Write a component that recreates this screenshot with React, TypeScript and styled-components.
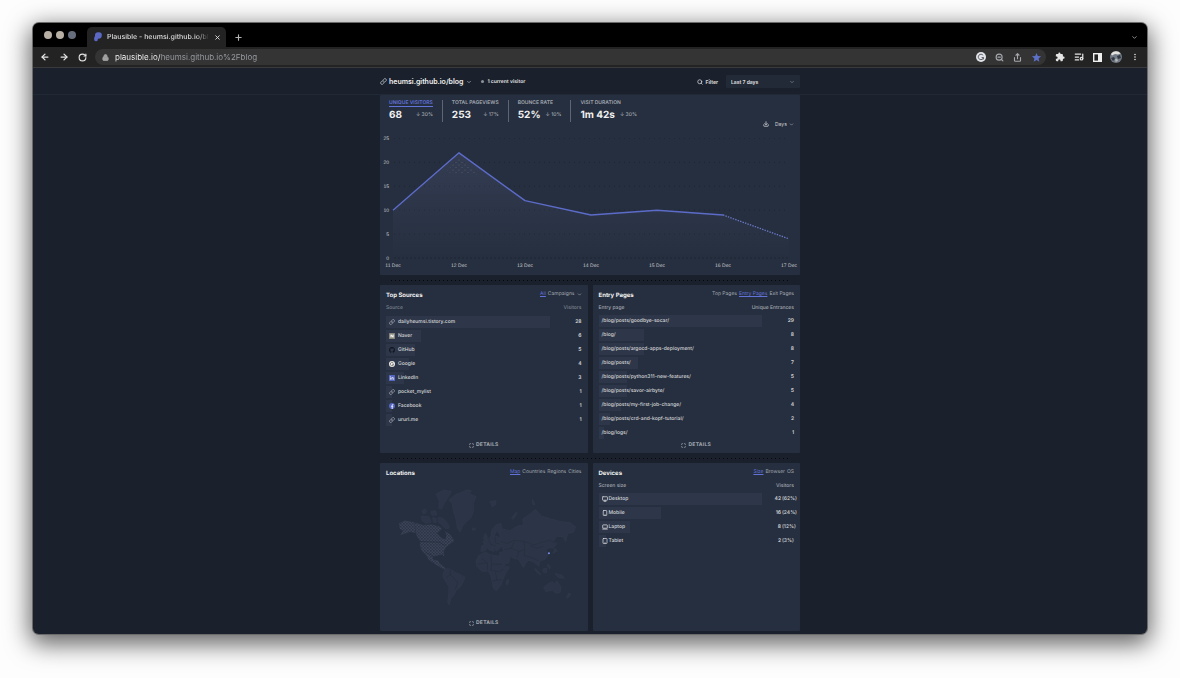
import React from "react";
import styled, { createGlobalStyle, css } from "styled-components";
import {
  ArrowLeft,
  ArrowRight,
  ChevronDown,
  Download,
  Link as LinkIcon,
  ListMusic,
  Lock,
  Maximize,
  Monitor,
  Plus,
  RotateCw,
  Search,
  Share,
  Smartphone,
  Tablet,
  X,
  ZoomOut,
} from "lucide-react";
import { MdExtension, MdStar, MdMoreVert } from "react-icons/md";
import { FaGithub } from "react-icons/fa";

const color = {
  page: "#1b212c",
  card: "#262f3f",
  bar: "#2e3749",
  text: "#d6d7d9",
  strong: "#f1f1f0",
  muted: "#a3a8b0",
  faint: "#7b828e",
  accent: "#6172d8",
};

const Global = createGlobalStyle`
  * { box-sizing: border-box; }
  body {
    margin: 0;
    background: #fdfdfd;
    color: ${color.text};
    font-family: Inter, "Liberation Sans", sans-serif;
    font-size: 5px;
    line-height: 8px;
    text-rendering: geometricPrecision;
  }
  button, select, input { font: inherit; color: inherit; }
  h1, h2, p, dl, dd, dt, ul { margin: 0; padding: 0; }
  svg { display: block; flex: none; }
`;

/* ---------- browser frame ---------- */

const Window = styled.div`
  margin: 23px 33px 44px;
  border-radius: 6px;
  overflow: hidden;
  background: ${color.page};
  box-shadow: 0 0 0 1px #6b6b6b, 0 7px 24px 3px rgba(0, 0, 0, 0.62);
`;

const TabStrip = styled.div`
  display: flex;
  align-items: flex-end;
  height: 24px;
  padding: 0 9px 0 11px;
  background: #000;
`;

const Lights = styled.div`
  display: flex;
  gap: 4px;
  align-self: center;
  margin-right: 11px;
`;

const Light = styled.span<{ $tone: string }>`
  width: 8px;
  height: 8px;
  border-radius: 50%;
  background: ${(p) => p.$tone};
`;

const Tab = styled.div`
  display: flex;
  align-items: center;
  width: 139px;
  height: 20px;
  padding: 0 6px 0 7px;
  gap: 5px;
  border-radius: 5px 5px 0 0;
  background: #232323;
`;

const TabTitle = styled.span`
  flex: 1;
  white-space: nowrap;
  font-size: 7px;
  line-height: 10px;
  font-weight: 500;
  color: #dcdcdc;
  mask-image: linear-gradient(90deg, #000 88%, transparent);
`;

const IconButton = styled.button<{ $tone?: string }>`
  display: flex;
  align-items: center;
  justify-content: center;
  padding: 0;
  border: 0;
  background: none;
  color: ${(p) => p.$tone || "#e4e4e4"};
`;

const NewTab = styled(IconButton)`
  height: 20px;
  margin-left: 8px;
`;

const TabMenu = styled(IconButton)`
  height: 20px;
  margin-left: auto;
`;

const Toolbar = styled.div`
  display: flex;
  align-items: center;
  height: 21px;
  gap: 9px;
  padding: 0 7px;
  background: #232323;
  border-bottom: 1px solid #3a3a3c;
`;

const Address = styled.form`
  display: flex;
  flex: 1;
  align-items: center;
  gap: 6px;
  height: 16px;
  margin-left: -1px;
  padding: 0 4px 0 7px;
  border-radius: 8px;
  background: #343434;
`;

const AddressInput = styled.input`
  flex: 1;
  min-width: 0;
  padding: 0;
  border: 0;
  outline: 0;
  font-size: 8px;
  line-height: 12px;
  color: transparent;
  background: linear-gradient(90deg, #fff 45px, #9c9fa6 45px);
  background-clip: text;
  -webkit-background-clip: text;
`;

const AddressActions = styled.div`
  display: flex;
  align-items: center;
  gap: 9px;
`;

const Avatar = styled(IconButton)`
  width: 12px;
  height: 12px;
  margin: 0 -1px;
`;

/* ---------- site header ---------- */

const SiteHeader = styled.header`
  border-bottom: 1px solid #222936;
`;

const Container = styled.div`
  width: 420px;
  max-width: 100%;
  margin: 0 auto;
`;

const HeaderRow = styled(Container)`
  display: flex;
  align-items: center;
  height: 26px;
  padding-top: 1px;
`;

const SiteButton = styled.button`
  display: flex;
  align-items: center;
  gap: 2px;
  padding: 0;
  border: 0;
  background: none;
  color: ${color.muted};
`;

const SiteName = styled.h1`
  font-size: 7px;
  line-height: 10px;
  font-weight: 600;
  color: ${color.strong};
  margin-right: 1px;
`;

const Current = styled.p`
  display: flex;
  align-items: center;
  gap: 3px;
  margin-left: 9px;
  font-weight: 700;
`;

const Pulse = styled.span`
  width: 3px;
  height: 3px;
  border-radius: 50%;
  background: #8d939c;
`;

const FilterButton = styled.button`
  display: flex;
  align-items: center;
  gap: 2px;
  margin: 0 8px 0 auto;
  padding: 0;
  border: 0;
  background: none;
  font-weight: 700;
`;

const SelectBox = styled.label<{ $filled?: boolean }>`
  display: flex;
  align-items: center;
  gap: 2px;
  color: ${color.muted};
  ${(p) =>
    p.$filled &&
    css`
      width: 74px;
      height: 13px;
      padding: 0 5px;
      border-radius: 1px;
      background: #222937;
      font-weight: 700;
    `}
`;

const Select = styled.select`
  flex: 1;
  appearance: none;
  padding: 0;
  border: 0;
  outline: 0;
  background: none;
  color: ${color.text};
`;

/* ---------- main graph ---------- */

const Main = styled(Container).attrs({ as: "main" })`
  padding-bottom: 3px;
`;

const Panel = styled.section`
  border-radius: 1px;
  background: ${color.card};
`;

const GraphHead = styled.div`
  display: flex;
  align-items: flex-end;
  justify-content: space-between;
  height: 34px;
  padding: 5px 6px 0 0;
`;

const Metrics = styled.dl`
  display: flex;
  align-self: flex-start;
`;

const Metric = styled.div`
  height: 22px;
  padding: 0 9px;
  border-right: 1px solid #5d6572;
  &:last-child { border-right: 0; }
`;

const MetricLabel = styled.dt<{ $active?: boolean }>`
  width: max-content;
  font-size: 5px;
  line-height: 6px;
  font-weight: 600;
  text-transform: uppercase;
  color: ${(p) => (p.$active ? color.accent : color.muted)};
  border-bottom: 1px solid ${(p) => (p.$active ? color.accent : "transparent")};
`;

const MetricValue = styled.dd`
  display: flex;
  align-items: center;
  justify-content: space-between;
  gap: 5px;
  height: 16px;
  font-size: 10px;
  line-height: 16px;
  font-weight: 700;
  color: ${color.strong};
  white-space: nowrap;
`;

const Change = styled.span`
  font-size: 5px;
  font-weight: 500;
  color: ${color.muted};
`;

const GraphTools = styled.div`
  display: flex;
  align-items: center;
  height: 10px;
  gap: 6px;
`;

const ChartSvg = styled.svg`
  width: 100%;
  height: auto;
  text {
    font-family: "Liberation Sans", sans-serif;
    font-size: 5px;
    fill: #c9cbcf;
  }
`;

/* ---------- report cards ---------- */

const Cards = styled.div`
  display: grid;
  grid-template-columns: 1fr 1fr;
  gap: 0 5px;
`;

const DotRule = styled.div`
  grid-column: 1 / -1;
  height: 10px;
  margin: 0 11px;
  background: repeating-linear-gradient(90deg, #05070a 0 1px, transparent 1px 4px) center / 100% 1px no-repeat;
`;

const Card = styled(Panel)`
  display: flex;
  flex-direction: column;
  min-height: 168px;
  padding: 5px 6px 4px;
`;

const CardHead = styled.div`
  display: flex;
  justify-content: space-between;
  height: 12px;
`;

const CardTitle = styled.h2`
  font-size: 6px;
  line-height: 12px;
  font-weight: 700;
  color: ${color.strong};
`;

const Tabs = styled.nav`
  display: flex;
  align-items: center;
  gap: 2px;
  height: 8px;
`;

const TabLink = styled.a<{ $active?: boolean }>`
  font-size: 5px;
  line-height: 8px;
  color: ${(p) => (p.$active ? color.accent : color.muted)};
  text-decoration: ${(p) => (p.$active ? "underline" : "none")};
`;

const Report = styled.table<{ $spaced?: boolean }>`
  width: 100%;
  table-layout: fixed;
  border-collapse: collapse;
  margin-top: 1px;
  th {
    height: ${(p) => (p.$spaced ? 13 : 12)}px;
    padding: 1px 0 0;
    vertical-align: top;
    text-align: left;
    font-weight: 500;
    color: ${(p) => (p.$spaced ? color.faint : color.muted)};
  }
  th:last-child { width: 32px; text-align: right; white-space: nowrap; direction: rtl; }
  td { padding: 0 0 2px; }
  td:last-child { text-align: right; font-weight: 600; white-space: nowrap; }
`;

const Bar = styled.div<{ $tight?: boolean }>`
  display: flex;
  align-items: center;
  gap: ${(p) => (p.$tight ? 1 : 3)}px;
  height: 12px;
  padding-left: 3px;
  background: ${color.bar};
  font-weight: 500;
  white-space: nowrap;
`;

const Percent = styled.span`
  display: inline-block;
  width: 12px;
  margin-left: 1px;
  text-align: left;
  font-weight: 500;
`;

const Details = styled.a`
  display: flex;
  align-items: center;
  gap: 2px;
  margin: auto auto 0;
  font-size: 5px;
  line-height: 8px;
  font-weight: 700;
  letter-spacing: 0.05em;
  color: ${color.muted};
  text-decoration: none;
`;

const WorldMap = styled.svg`
  width: 187px;
  height: 123px;
  margin: 6px auto 0;
`;

/* ---------- drawings ---------- */

const PlausibleLogo = () => (
  <svg width="8" height="10" viewBox="0 0 8 10">
    <path d="M1 3.2A3 3 0 0 1 4 0.2h1a3 3 0 0 1 2.8 3.4A3.4 3.4 0 0 1 4.4 6.8H3.8V8A1.9 1.9 0 0 1 .2 8V5.4A1.8 1.8 0 0 0 1 4Z" fill="#5b69c4" />
  </svg>
);

const Grammarly = () => (
  <svg width="10" height="10" viewBox="0 0 10 10">
    <circle cx="5" cy="5" r="5" fill="#e2e3e6" />
    <path d="M7.2 3.4A2.7 2.7 0 1 0 7.6 5.6H5.6M7.4 5.6V7.4" fill="none" stroke="#565a66" strokeWidth="1" />
  </svg>
);

const SidePanel = () => (
  <svg width="9" height="9" viewBox="0 0 9 9">
    <rect x="0.7" y="0.7" width="7.6" height="7.6" fill="none" stroke="#efefef" strokeWidth="1.4" />
    <rect x="5" y="1" width="3.3" height="7" fill="#efefef" />
  </svg>
);

const AvatarPicture = () => (
  <svg width="12" height="12" viewBox="0 0 12 12">
    <circle cx="6" cy="6" r="6" fill="#717986" />
    <path d="M1 3A6 6 0 0 1 10.6 2.4L8 3.6 5 3 2 4.6Z" fill="#e3e1dc" />
    <path d="M1 7 4 6l1 2-2 2ZM7 5l3-1 1 3-3 1Z" fill="#323842" />
    <path d="M5 8 7 7.4 8 10 5.6 11Z" fill="#b6b6b4" />
  </svg>
);

const NaverMark = () => (
  <svg width="6" height="6" viewBox="0 0 6 6">
    <rect width="6" height="6" rx="0.6" fill="#85857c" />
    <path d="M1.4 4.6V1.4h1.2l1 1.5V1.4h1.1v3.2H3.5l-1-1.5v1.5Z" fill="#f2f2ee" />
  </svg>
);

const GoogleMark = () => (
  <svg width="6" height="6" viewBox="0 0 6 6">
    <circle cx="3" cy="3" r="3" fill="#eeeeec" />
    <path d="M4.3 1.9A1.7 1.7 0 1 0 4.7 3.2H3.1" fill="none" stroke="#6f6c68" strokeWidth="0.8" />
  </svg>
);

const LinkedInMark = () => (
  <svg width="6" height="6" viewBox="0 0 6 6">
    <rect width="6" height="6" rx="0.6" fill="#5466c4" />
    <path d="M1.4 2.4v2.3M1.4 1.1v.7M2.9 4.7V2.4M2.9 3.4c0-1.2 1.7-1.2 1.7 0v1.3" fill="none" stroke="#f4f4f8" strokeWidth="0.8" />
  </svg>
);

const FacebookMark = () => (
  <svg width="6" height="6" viewBox="0 0 6 6">
    <circle cx="3" cy="3" r="3" fill="#5466c4" />
    <path d="M4.3 1.5H3.9c-.6 0-.7.3-.7.8V6M2.2 3.3h2" fill="none" stroke="#f4f4f8" strokeWidth="0.9" />
  </svg>
);

const LaptopMark = () => (
  <svg width="6" height="6" viewBox="0 0 6 6" fill="none" stroke="currentColor" strokeWidth="0.8">
    <rect x="0.7" y="0.9" width="4.6" height="3.3" rx="0.4" />
    <path d="M0.3 5.1H5.7" />
  </svg>
);

const ChainMark = () => <LinkIcon size={6} strokeWidth={3} color="#a5aab2" />;

const source = {
  link: <ChainMark />,
  naver: <NaverMark />,
  github: <FaGithub size={6} color="#0f141c" />,
  google: <GoogleMark />,
  linkedin: <LinkedInMark />,
  facebook: <FacebookMark />,
};

const xAt = (i: number) => 13 + i * 66;
const yAt = (v: number) => 129 - v * 4.78;
const visits = [10, 22, 12, 9, 10, 9, 4];
const points = visits.map((v, i) => `${xAt(i)},${yAt(v)}`);

const Chart = () => (
  <ChartSvg viewBox="0 0 420 146" role="img" aria-label="Unique visitors per day">
    <defs>
      <linearGradient id="area" x1="0" y1="0" x2="0" y2="1">
        <stop offset="0" stopColor="#7a84b8" stopOpacity="0.16" />
        <stop offset="1" stopColor="#7a84b8" stopOpacity="0" />
      </linearGradient>
      <pattern id="speck" width="6" height="5" patternUnits="userSpaceOnUse">
        <circle cx="1" cy="1" r="0.5" fill="#596172" />
        <circle cx="4" cy="3.5" r="0.5" fill="#596172" />
      </pattern>
    </defs>
    {[0, 5, 10, 15, 20, 25].map((v) => (
      <g key={v}>
        <line x1="14" x2="409" y1={yAt(v)} y2={yAt(v)} stroke="#1b222e" strokeWidth="1" strokeDasharray={v ? "1 4" : "2 2"} strokeOpacity="0.7" />
        <text x="9" y={yAt(v) + 1.5} textAnchor="end">{v}</text>
      </g>
    ))}
    <polygon points={`13,129 ${points.join(" ")} 409,129`} fill="url(#area)" />
    <polygon points="79,28 66,43 98,46" fill="url(#speck)" />
    <polyline points={points.slice(0, 6).join(" ")} fill="none" stroke="#5c6bc8" strokeWidth="1.4" strokeLinejoin="round" />
    <polyline points={points.slice(5).join(" ")} fill="none" stroke="#6b78c8" strokeWidth="1.3" strokeDasharray="1.4 1.2" />
    {visits.map((_, i) => (
      <text key={i} x={xAt(i)} y="138" textAnchor="middle">{`${11 + i} Dec`}</text>
    ))}
  </ChartSvg>
);

const land = [
  "M134 220 160 228 185 226 208 232 215 238 200 252 214 266 226 270 230 258 226 246 240 256 252 274 244 280 228 292 220 306 222 320 216 314 200 318 186 320 190 332 204 334 208 342 226 356 220 358 206 350 190 340 176 330 168 316 156 304 150 288 152 276 140 258Z",
  "M88 222 104 214 132 219 136 250 120 246 104 252 92 256 100 244 90 238Z",
  "M198 134 222 122 244 126 236 140 224 160 214 180 206 176 208 156Z",
  "M204 204 218 206 232 220 238 236 226 238 214 226 204 218Z",
  "M154 200 176 202 184 218 168 222 156 214ZM156 184 166 178 170 188 160 194ZM182 186 196 184 200 196 186 198ZM188 204 198 206 198 220 190 218Z",
  "M236 152 256 136 276 128 290 122 304 124 298 132 318 142 310 160 310 184 302 206 286 220 276 232 270 248 262 236 258 212 250 184 246 162Z",
  "M224 358 240 358 254 368 268 374 284 382 280 396 270 412 258 422 252 436 242 446 238 466 233 460 236 430 236 410 224 392 218 378Z",
  "M326 318 346 308 360 316 388 320 396 336 404 350 418 352 406 372 398 390 392 408 378 424 370 416 366 398 362 378 354 364 336 366 320 350 318 334Z",
  "M332 306 334 290 344 284 338 276 356 268 364 258 384 262 392 276 390 296 378 304 366 292 372 306 356 300 350 294 344 304Z",
  "M362 256 366 240 378 226 392 222 396 240 386 252 378 244 372 262ZM340 266 346 252 352 266 344 272ZM306 236 316 236 314 242 306 241Z",
  "M390 276 388 250 396 238 420 244 440 230 460 226 458 208 476 196 496 180 514 200 540 208 570 216 600 220 616 232 610 248 592 252 586 276 578 262 560 260 548 276 560 282 548 296 540 294 526 300 534 316 524 330 508 334 506 350 498 344 490 338 476 332 466 342 460 354 452 342 446 330 430 326 420 320 416 340 400 346 390 326 388 310 402 306 396 294Z",
  "M360 156 378 154 376 166 366 172ZM424 206 438 188 440 192 428 210ZM486 150 494 166 488 166Z",
  "M520 412 532 404 546 396 552 402 560 394 572 412 570 428 558 432 546 422 526 426Z",
  "M494 356 512 374 508 376 494 362ZM518 358 530 356 528 370 518 368ZM554 372 574 376 582 386 564 384ZM532 344 540 350 538 358 532 352Z",
  "M596 430 602 434 592 446 588 444ZM410 392 416 390 412 406 408 404ZM554 296 560 304 548 312Z",
];

const borders =
  "M150 276 206 278 226 288M166 308 190 320M236 372 250 384 262 398 256 420M240 360 242 376 228 384M334 326 352 340 352 362M362 318 364 344 396 344M364 344 362 362 386 366 400 360M350 340 320 344M376 366 380 392 366 394M380 392 396 390M390 276 412 282 432 272 462 276 492 286 516 278 540 272 556 282M432 276 424 296 402 300M424 296 446 306 464 300 462 276M464 300 462 318 488 326 504 334M480 288 498 296 520 290M446 306 440 326M356 268 362 286 378 288M374 262 376 280 392 284";

const WorldMapDrawing = () => (
  <WorldMap viewBox="60 110 560 368" role="img" aria-label="Visitors by country">
    <defs>
      <pattern id="dots" width="9" height="9" patternUnits="userSpaceOnUse">
        <rect x="1" y="1" width="3" height="3" fill="#5a6376" />
        <rect x="5.5" y="5.5" width="3" height="3" fill="#5a6376" />
      </pattern>
    </defs>
    {land.map((d) => (
      <path key={d} d={d} fill="#2c3547" stroke="#2f394b" strokeWidth="2" />
    ))}
    {land.slice(0, 2).map((d) => (
      <path key={d} d={d} fill="url(#dots)" fillOpacity="0.8" />
    ))}
    <path d={borders} fill="none" stroke={color.card} strokeWidth="2.4" />
    <circle cx="536" cy="311" r="3" fill="#7a8cf0" />
  </WorldMap>
);

/* ---------- data ---------- */

const sources = [
  { icon: source.link, name: "dailyheumsi.tistory.com", count: 28 },
  { icon: source.naver, name: "Naver", count: 6 },
  { icon: source.github, name: "GitHub", count: 5 },
  { icon: source.google, name: "Google", count: 4 },
  { icon: source.linkedin, name: "LinkedIn", count: 3 },
  { icon: source.link, name: "pocket_mylist", count: 1 },
  { icon: source.facebook, name: "Facebook", count: 1 },
  { icon: source.link, name: "ururl.me", count: 1 },
];

const entries = [
  { name: "/blog/posts/goodbye-socar/", count: 29 },
  { name: "/blog/", count: 8 },
  { name: "/blog/posts/argocd-apps-deployment/", count: 8 },
  { name: "/blog/posts/", count: 7 },
  { name: "/blog/posts/python311-new-features/", count: 5 },
  { name: "/blog/posts/savor-airbyte/", count: 5 },
  { name: "/blog/posts/my-first-job-change/", count: 4 },
  { name: "/blog/posts/crd-and-kopf-tutorial/", count: 2 },
  { name: "/blog/logs/", count: 1 },
];

const devices = [
  { icon: <Monitor size={6} strokeWidth={3} />, name: "Desktop", count: 42, percent: "(62%)" },
  { icon: <Smartphone size={6} strokeWidth={3} />, name: "Mobile", count: 16, percent: "(24%)" },
  { icon: <LaptopMark />, name: "Laptop", count: 8, percent: "(12%)" },
  { icon: <Tablet size={6} strokeWidth={3} />, name: "Tablet", count: 2, percent: "(3%)" },
];

const metrics = [
  { label: "Unique visitors", value: "68", change: "30%", active: true },
  { label: "Total pageviews", value: "253", change: "17%" },
  { label: "Bounce rate", value: "52%", change: "10%" },
  { label: "Visit duration", value: "1m 42s", change: "30%" },
];

type Row = { icon?: React.ReactNode; name: string; count: number; percent?: string };

const ReportTable = ({ heads, rows, spaced }: { heads: [string, string]; rows: Row[]; spaced?: boolean }) => (
  <Report $spaced={spaced}>
    <thead>
      <tr>
        <th scope="col">{heads[0]}</th>
        <th scope="col">{heads[1]}</th>
      </tr>
    </thead>
    <tbody>
      {rows.map((row) => (
        <tr key={row.name}>
          <td>
            <Bar $tight={Boolean(row.percent)} style={{ width: `${(row.count / rows[0].count) * 100}%` }}>
              {row.icon}
              {row.name}
            </Bar>
          </td>
          <td>
            {row.count}
            {row.percent && <Percent>{row.percent}</Percent>}
          </td>
        </tr>
      ))}
    </tbody>
  </Report>
);

const CardTop = ({ title, tabs, active, menu }: { title: string; tabs: string[]; active: string; menu?: boolean }) => (
  <CardHead>
    <CardTitle>{title}</CardTitle>
    <Tabs>
      {tabs.map((tab) => (
        <TabLink key={tab} href="#" $active={tab === active}>{tab}</TabLink>
      ))}
      {menu && <ChevronDown size={5} strokeWidth={3} color={color.muted} />}
    </Tabs>
  </CardHead>
);

const DetailsLink = () => (
  <Details href="#">
    <Maximize size={5} strokeWidth={3} />
    DETAILS
  </Details>
);

export default function App() {
  return (
    <>
      <Global />
      <Window>
        <TabStrip>
          <Lights>
            <Light $tone="#b9b0a5" />
            <Light $tone="#b9b0a5" />
            <Light $tone="#666d7c" />
          </Lights>
          <Tab>
            <PlausibleLogo />
            <TabTitle>Plausible - heumsi.github.io/bl</TabTitle>
            <IconButton aria-label="Close tab"><X size={7} strokeWidth={3} /></IconButton>
          </Tab>
          <NewTab aria-label="New tab" $tone="#b5b5b5"><Plus size={9} strokeWidth={3} /></NewTab>
          <TabMenu aria-label="Search tabs" $tone="#9b9b9b"><ChevronDown size={7} strokeWidth={3} /></TabMenu>
        </TabStrip>
        <Toolbar>
          <IconButton aria-label="Back"><ArrowLeft size={10} strokeWidth={3} /></IconButton>
          <IconButton aria-label="Forward"><ArrowRight size={10} strokeWidth={3} /></IconButton>
          <IconButton aria-label="Reload"><RotateCw size={9} strokeWidth={3} /></IconButton>
          <Address>
            <Lock size={7} strokeWidth={3} color="#a3a3a3" fill="#a3a3a3" />
            <AddressInput aria-label="Address" defaultValue="plausible.io/heumsi.github.io%2Fblog" />
            <AddressActions>
              <IconButton type="button" aria-label="Grammarly"><Grammarly /></IconButton>
              <IconButton type="button" aria-label="Zoom" $tone="#a5a7ad"><ZoomOut size={9} strokeWidth={3} /></IconButton>
              <IconButton type="button" aria-label="Share" $tone="#a5a7ad"><Share size={9} strokeWidth={3} /></IconButton>
              <IconButton type="button" aria-label="Bookmark" $tone="#5c6fc9"><MdStar size={11} /></IconButton>
            </AddressActions>
          </Address>
          <IconButton aria-label="Extensions"><MdExtension size={10} /></IconButton>
          <IconButton aria-label="Media"><ListMusic size={10} strokeWidth={3} /></IconButton>
          <IconButton aria-label="Side panel"><SidePanel /></IconButton>
          <Avatar aria-label="Profile"><AvatarPicture /></Avatar>
          <IconButton aria-label="Menu"><MdMoreVert size={10} /></IconButton>
        </Toolbar>

        <SiteHeader>
          <HeaderRow>
            <SiteButton>
              <LinkIcon size={7} strokeWidth={3} />
              <SiteName>heumsi.github.io/blog</SiteName>
              <ChevronDown size={6} strokeWidth={3} />
            </SiteButton>
            <Current><Pulse />1 current visitor</Current>
            <FilterButton><Search size={6} strokeWidth={3} />Filter</FilterButton>
            <SelectBox $filled>
              <Select aria-label="Period"><option>Last 7 days</option></Select>
              <ChevronDown size={6} />
            </SelectBox>
          </HeaderRow>
        </SiteHeader>

        <Main>
          <Panel>
            <GraphHead>
              <Metrics>
                {metrics.map((m) => (
                  <Metric key={m.label}>
                    <MetricLabel $active={m.active}>{m.label}</MetricLabel>
                    <MetricValue>{m.value}<Change>↓ {m.change}</Change></MetricValue>
                  </Metric>
                ))}
              </Metrics>
              <GraphTools>
                <IconButton aria-label="Download" $tone={color.text}><Download size={6} strokeWidth={3} /></IconButton>
                <SelectBox>
                  <Select aria-label="Interval"><option>Days</option></Select>
                  <ChevronDown size={5} strokeWidth={3} />
                </SelectBox>
              </GraphTools>
            </GraphHead>
            <Chart />
          </Panel>

          <Cards>
            <DotRule />
            <Card>
              <CardTop title="Top Sources" tabs={["All", "Campaigns"]} active="All" menu />
              <ReportTable heads={["Source", "Visitors"]} rows={sources} spaced />
              <DetailsLink />
            </Card>
            <Card>
              <CardTop title="Entry Pages" tabs={["Top Pages", "Entry Pages", "Exit Pages"]} active="Entry Pages" />
              <ReportTable heads={["Entry page", "Unique Entrances"]} rows={entries} />
              <DetailsLink />
            </Card>
            <DotRule />
            <Card>
              <CardTop title="Locations" tabs={["Map", "Countries", "Regions", "Cities"]} active="Map" />
              <WorldMapDrawing />
              <DetailsLink />
            </Card>
            <Card>
              <CardTop title="Devices" tabs={["Size", "Browser", "OS"]} active="Size" />
              <ReportTable heads={["Screen size", "Visitors"]} rows={devices} />
            </Card>
          </Cards>
        </Main>
      </Window>
    </>
  );
}
